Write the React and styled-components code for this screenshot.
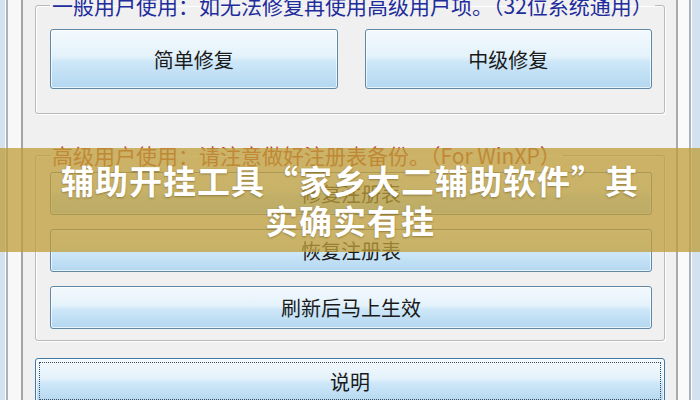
import React from 'react';
import styled, { createGlobalStyle } from 'styled-components';

const GlobalStyle = createGlobalStyle`
  html, body {
    margin: 0;
    padding: 0;
    background: #f0f0f0;
  }
  body {
    font-family: "Noto Sans CJK SC", "Noto Sans", sans-serif;
  }
`;

const Page = styled.div`
  position: relative;
  width: 700px;
  height: 400px;
  overflow: hidden;
  display: flex;
  background: #f0f0f0;
`;

const LeftRail = styled.div`
  width: 23px;
  flex: none;
  background: linear-gradient(
    to right,
    #d4e2ef 0 5px,
    #ffffff 5px 6px,
    #aab3bb 6px 8px,
    #f8f8f8 8px 21px,
    #a4a4a4 21px 23px
  );
`;

const RightRail = styled.div`
  width: 24px;
  flex: none;
  background: linear-gradient(
    to right,
    #a9a9a9 0 2px,
    #fafafa 2px 13px,
    #aab3bb 13px 15px,
    #ffffff 15px 16px,
    #d4e2ef 16px 24px
  );
`;

const Content = styled.div`
  flex: 1;
  min-width: 0;
  display: flex;
  flex-direction: column;
  padding: 0 11px 0 12px;
`;

const GroupBox = styled.fieldset`
  margin: ${(p) => p.$top}px 0 0 0;
  padding: ${(p) => p.$pad};
  min-width: 0;
  border: 1px solid #b9b9b9;
  border-radius: 3px;
  box-shadow: 1px 1px 0 #ffffff, inset 1px 1px 0 #ffffff;
`;

const Legend = styled.legend`
  margin-left: 0;
  padding: 0 2px;
  font-size: 21px;
  line-height: 22px;
  color: ${(p) => p.$color};
  white-space: nowrap;
`;

const ButtonRow = styled.div`
  display: grid;
  grid-template-columns: 1fr 1fr;
  gap: 27px;
`;

const ButtonStack = styled.div`
  display: flex;
  flex-direction: column;
  gap: 14px;
`;

const WinButton = styled.button`
  position: relative;
  box-sizing: border-box;
  width: 100%;
  height: ${(p) => p.$h}px;
  margin: 0;
  padding: 0;
  border: 1px solid #5f88a6;
  border-radius: 3px;
  background: linear-gradient(
    to bottom,
    #f3f9fd 0%,
    #e4f2fb 45%,
    #cde7f8 55%,
    #b3d7f0 100%
  );
  box-shadow: inset 0 0 0 1px rgba(255, 255, 255, 0.7);
  font-family: "Noto Sans CJK SC", "Noto Sans", sans-serif;
  font-size: 20px;
  color: #1a1a1a;
  cursor: pointer;
`;

const FocusButton = styled(WinButton)`
  border-color: #3f7aa6;
  &::after {
    content: '';
    position: absolute;
    inset: 3px;
    border: 1px dotted #3a4a58;
    border-radius: 1px;
  }
`;

const InfoWrap = styled.div`
  margin-top: 17px;
`;

const Banner = styled.div`
  position: absolute;
  left: 0;
  right: 0;
  top: 148px;
  height: 104px;
  display: flex;
  flex-direction: column;
  align-items: center;
  justify-content: center;
  background: rgba(190, 158, 58, 0.76);
`;

const BannerLine = styled.div`
  font-family: "Noto Sans CJK SC", "Noto Sans", sans-serif;
  font-weight: 700;
  font-size: 33px;
  line-height: 40px;
  letter-spacing: 1px;
  color: #ffffff;
  text-shadow: 0 1px 2px rgba(80, 60, 20, 0.45);
  white-space: nowrap;
`;

export default function App() {
  return (
    <>
      <GlobalStyle />
      <Page>
        <LeftRail />
        <Content>
          <GroupBox $top={-6} $pad="13px 12px 24px 14px">
            <Legend $color="#1e2c9c">
              一般用户使用：如无法修复再使用高级用户项。（32位系统通用）
            </Legend>
            <ButtonRow>
              <WinButton $h={60}>简单修复</WinButton>
              <WinButton $h={60}>中级修复</WinButton>
            </ButtonRow>
          </GroupBox>
          <GroupBox $top={30} $pad="6px 12px 11px 14px">
            <Legend $color="#c2452c">
              高级用户使用：请注意做好注册表备份。（For WinXP）
            </Legend>
            <ButtonStack>
              <WinButton $h={43}>修复注册表</WinButton>
              <WinButton $h={43}>恢复注册表</WinButton>
              <WinButton $h={43}>刷新后马上生效</WinButton>
            </ButtonStack>
          </GroupBox>
          <InfoWrap>
            <FocusButton $h={46}>说明</FocusButton>
          </InfoWrap>
        </Content>
        <RightRail />
        <Banner>
          <BannerLine>辅助开挂工具“家乡大二辅助软件”其</BannerLine>
          <BannerLine>实确实有挂</BannerLine>
        </Banner>
      </Page>
    </>
  );
}
